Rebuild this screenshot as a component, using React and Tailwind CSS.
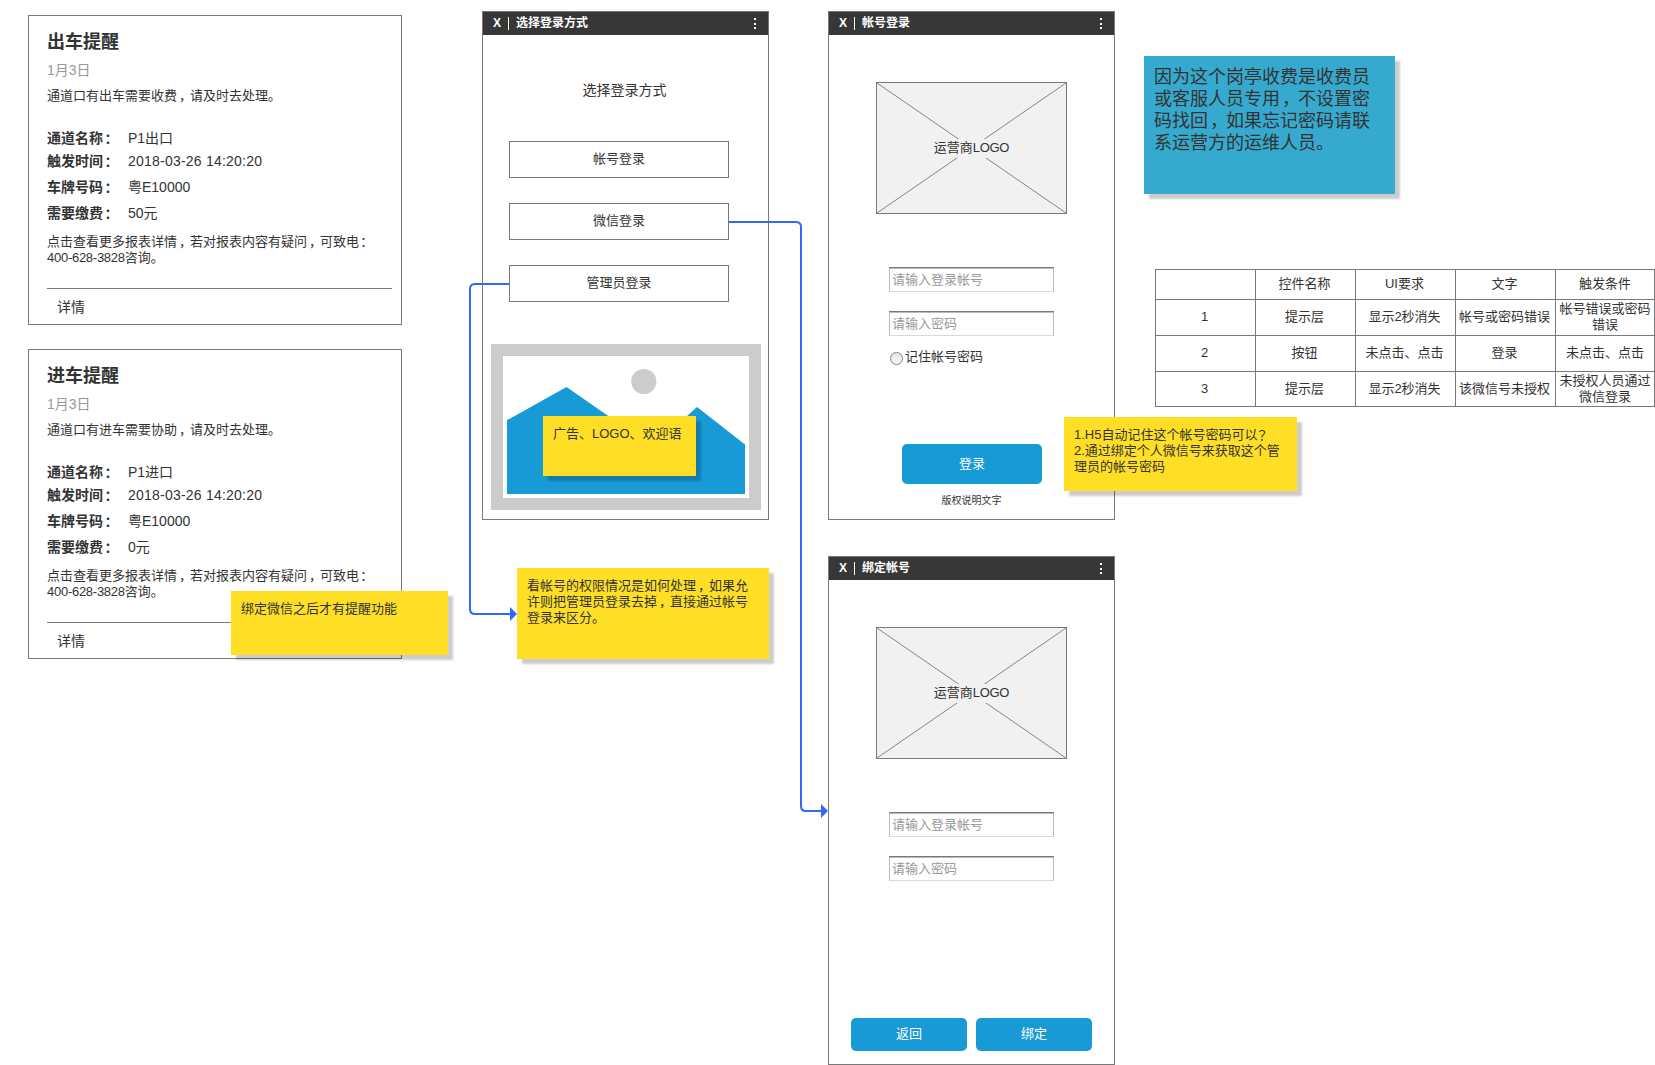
import React from 'react';

// Full-width punctuation is nudged or swapped so it sits where the wireframe font puts it.
function T({ children }) {
  return children.split(/([，：？])/).map((part, i) => {
    if (part === '，') return <span key={i} className="relative left-[2px]">，</span>;
    if (part === '：' || part === '？') {
      return (
        <span key={i} lang="ja" className="relative -left-[2px] top-px font-['Noto_Sans_CJK_JP',sans-serif] leading-none">
          {part}
        </span>
      );
    }
    return part;
  });
}

function Notice({ title, body, rows }) {
  return (
    <section className="flex h-[310px] w-[374px] flex-col border border-[#797979] bg-white pl-[18px] pt-[14px]">
      <h2 className="h-6 text-[18px] font-bold leading-6">{title}</h2>
      <p className="mt-[7px] h-[18px] text-[14px] leading-[18px] text-[#999]">1月3日</p>
      <p className="mt-[9px] h-4 leading-4"><T>{body}</T></p>
      <dl className="mt-[25px] text-[14px] leading-[18px]">
        {rows.map(([k, v], i) => (
          <div key={k} className={i === 0 ? 'flex h-[18px]' : i === 1 ? 'mt-[5px] flex h-[18px]' : 'mt-2 flex h-[18px]'}>
            <dt className="w-[81px] font-bold"><T>{k}</T></dt>
            <dd className={i === 1 ? 'tracking-[0.22px]' : ''}>{v}</dd>
          </div>
        ))}
      </dl>
      <p className="mt-[12px] h-8 whitespace-nowrap leading-4">
        <T>点击查看更多报表详情，若对报表内容有疑问，可致电：</T>
        <br />
        <span className="tracking-[-0.27px]">400-628-3828</span>咨询。
      </p>
      <div className="mt-[22px] w-[345px] border-t border-[#797979]" />
      <p className="ml-[10px] mt-[9px] text-[14px] leading-[18px]">详情</p>
    </section>
  );
}

function Phone({ title, children }) {
  return (
    <section className="flex h-[509px] w-[287px] flex-col border border-[#797979] bg-white">
      <header className="flex h-[23px] shrink-0 items-center bg-[#373737] pl-[10px] pr-[12px] text-[12px] font-bold leading-[22px] text-white">
        <span className="w-[15px] pb-px">X</span>
        <span className="h-[13px] w-px bg-white" />
        <span className="ml-[7px] pb-px">{title}</span>
        <span className="ml-auto flex flex-col gap-[2.5px]">
          <i className="h-[2px] w-[2px] bg-white" />
          <i className="h-[2px] w-[2px] bg-white" />
          <i className="h-[2px] w-[2px] bg-white" />
        </span>
      </header>
      {children}
    </section>
  );
}

function LogoBox() {
  return (
    <div className="relative ml-[47px] mt-[47px] flex h-[132px] w-[191px] shrink-0 items-center justify-center border border-[#797979] bg-[#f1f1f1]">
      <svg className="absolute inset-0 h-full w-full" viewBox="0 0 189 130" stroke="#858585" strokeWidth="1">
        <path d="M0 0L189 130M189 0L0 130" />
      </svg>
      <span className="relative h-[19px] bg-[#f1f1f1] leading-[18px]">
        运营商<span className="tracking-[-0.3px]">LOGO</span>
      </span>
    </div>
  );
}

function Field({ text }) {
  return (
    <div className="ml-[60px] h-[25px] w-[165px] shrink-0 border-t border-[#797979]">
      <div className="h-6 border border-b-[#d9d9d9] border-l-[#bbb] border-r-[#bbb] border-t-[#bbb] pl-[2px] leading-[22px] text-[#999]">{text}</div>
    </div>
  );
}

function Note({ className, children }) {
  return (
    <div className={'bg-[#ffdf25] p-[10px] leading-4 shadow-[5px_5px_2px_rgba(0,0,0,0.2)] ' + className}>
      {children}
    </div>
  );
}

const table = [
  ['', '控件名称', 'UI要求', '文字', '触发条件'],
  ['1', '提示层', '显示2秒消失', '帐号或密码错误', '帐号错误或密码错误'],
  ['2', '按钮', '未点击、点击', '登录', '未点击、点击'],
  ['3', '提示层', '显示2秒消失', '该微信号未授权', '未授权人员通过微信登录'],
];

export default function App() {
  return (
    <main
      lang="zh-CN"
      className="relative flex h-[1065px] w-[1655px] overflow-hidden bg-white font-['Liberation_Sans','Noto_Sans_CJK_SC',sans-serif] text-[13px] text-[#333]"
    >
      <div className="ml-[28px] mt-[15px] flex w-[374px] shrink-0 flex-col gap-6">
        <Notice
          title="出车提醒"
          body="通道口有出车需要收费，请及时去处理。"
          rows={[['通道名称：', 'P1出口'], ['触发时间：', '2018-03-26 14:20:20'], ['车牌号码：', '粤E10000'], ['需要缴费：', '50元']]}
        />
        <Notice
          title="进车提醒"
          body="通道口有进车需要协助，请及时去处理。"
          rows={[['通道名称：', 'P1进口'], ['触发时间：', '2018-03-26 14:20:20'], ['车牌号码：', '粤E10000'], ['需要缴费：', '0元']]}
        />
      </div>

      <div className="ml-[80px] mt-[11px] w-[287px] shrink-0">
        <Phone title="选择登录方式">
          <h3 className="mt-[46px] h-[18px] pl-[99.5px] text-[14px] leading-[18px]">选择登录方式</h3>
          <div className="ml-[26px] mt-[42px] flex w-[220px] flex-col gap-[25px]">
            {['帐号登录', '微信登录', '管理员登录'].map((t) => (
              <button key={t} className="h-[37px] border border-[#797979] bg-white pb-[2px] leading-[33px]">{t}</button>
            ))}
          </div>
          <div className="ml-[8px] mt-[42px] h-[166px] w-[270px] border-12 border-[#ccc]">
            <svg className="block" width="246" height="142" viewBox="0 0 246 142">
              <path d="M4 64.3L63.5 31L150 91L194 51L242 88.5V138H4Z" fill="#189ad6" />
              <circle cx="140.8" cy="25.5" r="12.6" fill="#ccc" />
            </svg>
          </div>
        </Phone>
        <Note className="ml-[35px] mt-[48px] h-[91px] w-[252px]">
          <T>看帐号的权限情况是如何处理，如果允许则把管理员登录去掉，直接通过帐号登录来区分。</T>
        </Note>
      </div>

      <div className="ml-[59px] mt-[11px] flex w-[287px] shrink-0 flex-col gap-9">
        <Phone title="帐号登录">
          <LogoBox />
          <div className="mt-[53px] flex flex-col gap-[19px]">
            <Field text="请输入登录帐号" />
            <Field text="请输入密码" />
          </div>
          <label className="ml-[61px] mt-[13px] flex h-[18px] items-center leading-[18px]">
            <span className="mr-[2px] h-[13px] w-[13px] rounded-full border border-[#858585] bg-gradient-to-b from-[#e4e4e4] to-[#f8f8f8]" />
            <span className="pb-[2px]">记住帐号密码</span>
          </label>
          <button className="ml-[73px] mt-[77px] h-10 w-[140px] shrink-0 rounded-[5px] bg-[#189ad6] pb-px leading-[38px] text-white">登录</button>
          <p className="mt-[10px] text-center text-[10px] leading-[14px]">版权说明文字</p>
        </Phone>
        <Phone title="绑定帐号">
          <LogoBox />
          <div className="mt-[53px] flex flex-col gap-[19px]">
            <Field text="请输入登录帐号" />
            <Field text="请输入密码" />
          </div>
          <div className="ml-[22px] mt-[137px] flex gap-[9px] text-white">
            <button className="h-[33px] w-[116px] rounded-[5px] bg-[#189ad6] pb-[2px] leading-[31px]">返回</button>
            <button className="h-[33px] w-[116px] rounded-[5px] bg-[#189ad6] pb-[2px] leading-[31px]">绑定</button>
          </div>
        </Phone>
      </div>

      <div className="ml-[29px] mt-[56px] w-[511px] shrink-0">
        <div className="h-[138px] w-[251px] bg-[#36a9ce] px-[10px] py-[10px] text-[18px] leading-[22px] shadow-[5px_5px_2px_rgba(0,0,0,0.2)]">
          <T>因为这个岗亭收费是收费员或客服人员专用，不设置密码找回，如果忘记密码请联系运营方的运维人员。</T>
        </div>
        <div className="ml-[11px] mt-[75px] grid h-[138px] w-[500px] grid-cols-[100px_100px_100px_100px_100px] grid-rows-[30px_36px_36px_36px] border-l border-t border-[#797979] text-center leading-4">
          {table.flat().map((t, i) => (
            <div
              key={i}
              className={
                (i % 5 === 4 ? 'w-[99px] px-[3px] ' : 'w-[100px] pl-[2px] pr-1 ') +
                (i >= 15 ? 'h-[35px] ' : 'pb-px ') +
                'flex items-center justify-center border-b border-r border-[#797979]'
              }
            >
              {t}
            </div>
          ))}
        </div>
      </div>

      <Note className="absolute left-[543px] top-[416px] h-[60px] w-[153px]">广告、LOGO、欢迎语</Note>
      <Note className="absolute left-[231px] top-[591px] h-[64px] w-[217px]">绑定微信之后才有提醒功能</Note>
      <Note className="absolute left-[1064px] top-[417px] h-[74px] w-[233px]">
        <T>1.H5自动记住这个帐号密码可以？</T>
        <br />
        2.通过绑定个人微信号来获取这个管理员的帐号密码
      </Note>

      <svg className="pointer-events-none absolute left-0 top-0" width="1655" height="1065" fill="none">
        <path d="M729 222H796Q801 222 801 227V806Q801 811 806 811H822" stroke="#36f" strokeWidth="2" />
        <path d="M821 804L828 811L821 818Z" fill="#36f" />
        <path d="M509 284H475Q470 284 470 289V609Q470 614 475 614H511" stroke="#36f" strokeWidth="2" />
        <path d="M510 607L517 614L510 621Z" fill="#36f" />
      </svg>
    </main>
  );
}
